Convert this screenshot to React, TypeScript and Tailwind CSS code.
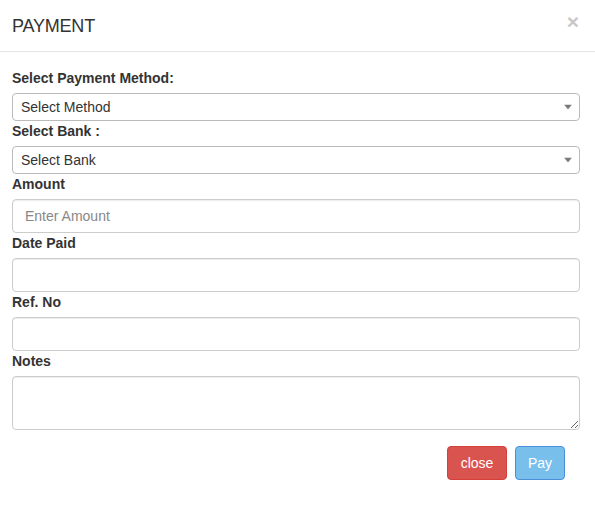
import React from "react";

function Label({ children }: { children: React.ReactNode }) {
  return (
    <label className="block text-[14px] font-bold leading-[20px] mb-[5px] text-[#333]">
      {children}
    </label>
  );
}

function SelectBox({ text }: { text: string }) {
  return (
    <div className="relative h-[28px] w-full rounded-[4px] border border-[#bbb] bg-white flex items-center pl-[8px] pt-[1px] text-[14px] text-[#333]">
      <span>{text}</span>
      <svg
        className="absolute right-[7px] top-1/2 -translate-y-1/2"
        width="8"
        height="5"
        viewBox="0 0 8 5"
      >
        <path d="M0 0 L8 0 L4 5 Z" fill="#7a7a7a" />
      </svg>
    </div>
  );
}

function TextInput({ placeholder }: { placeholder?: string }) {
  return (
    <input
      className="block h-[34px] w-full rounded-[4px] border border-[#ccc] bg-white px-[12px] text-[14px] text-[#333] placeholder:text-[#888] shadow-[inset_0_1px_1px_rgba(0,0,0,0.075)] outline-none"
      placeholder={placeholder}
    />
  );
}

export default function App() {
  return (
    <div
      className="w-[595px] h-[506px] bg-white text-[#333]"
      style={{ fontFamily: '"Liberation Sans", Arial, sans-serif' }}
    >
      <div className="h-[52px] border-b border-[#e5e5e5] flex items-center justify-between pl-[12px] pr-[16px]">
        <h4 className="text-[18px] leading-[20px] text-[#333] tracking-[-0.2px]">PAYMENT</h4>
        <span className="text-[21px] font-bold leading-none text-[#c8c8c8] -mt-[8px]">×</span>
      </div>
      <div className="px-[12px] pt-[16px] pr-[15px]">
        <Label>Select Payment Method:</Label>
        <SelectBox text="Select Method" />
        <Label>Select Bank :</Label>
        <SelectBox text="Select Bank" />
        <Label>Amount</Label>
        <TextInput placeholder="Enter Amount" />
        <Label>Date Paid</Label>
        <TextInput />
        <Label>Ref. No</Label>
        <TextInput />
        <Label>Notes</Label>
        <textarea className="block h-[54px] w-full rounded-[4px] border border-[#ccc] bg-white px-[12px] py-[6px] text-[14px] shadow-[inset_0_1px_1px_rgba(0,0,0,0.075)] outline-none" />
        <div className="flex justify-end gap-[8px] mt-[16px] pr-[15px]">
          <button className="h-[34px] w-[60px] rounded-[4px] border border-[#d43f3a] bg-[#d9534f] text-[14px] text-white">
            close
          </button>
          <button className="h-[34px] w-[50px] rounded-[4px] border border-[#4a90d9] bg-[#79bfec] text-[14px] text-white">
            Pay
          </button>
        </div>
      </div>
    </div>
  );
}
